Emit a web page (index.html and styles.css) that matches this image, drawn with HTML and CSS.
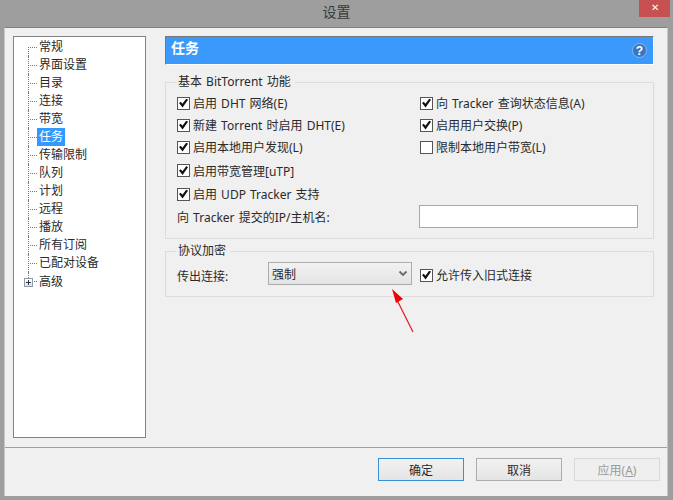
FILE: index.html
```html
<!DOCTYPE html>
<html lang="zh">
<head>
    <meta charset="UTF-8">
    <title>设置</title>
    <link rel="stylesheet" href="styles.css">
</head>
<body>

<div class="window">
    <div class="titlebar">
        <span class="title">设置</span>
        <span class="close">✕</span>
    </div>

    <div class="client">
        <div class="main">
            <ul class="tree">
                <li>常规</li>
                <li>界面设置</li>
                <li>目录</li>
                <li>连接</li>
                <li>带宽</li>
                <li><span class="selected">任务</span></li>
                <li>传输限制</li>
                <li>队列</li>
                <li>计划</li>
                <li>远程</li>
                <li>播放</li>
                <li>所有订阅</li>
                <li>已配对设备</li>
                <li class="expander"><span class="plus"></span>高级</li>
            </ul>

            <div class="pane">
                <div class="header">
                    <span class="header-title">任务</span>
                    <svg class="help" width="15" height="15" viewBox="0 0 15 15">
                        <circle cx="7.5" cy="7.5" r="7" fill="#3b77c0" stroke="#8db4e6"/>
                        <text x="7.5" y="12" text-anchor="middle" fill="#fff" font-size="12" font-weight="bold" font-family="Liberation Sans">?</text>
                    </svg>
                </div>

                <fieldset class="group group-basic">
                    <legend>基本 BitTorrent 功能</legend>
                    <div class="options">
                        <label><input type="checkbox" checked>启用 DHT 网络(E)</label>
                        <label><input type="checkbox" checked>向 Tracker 查询状态信息(A)</label>
                        <label><input type="checkbox" checked>新建 Torrent 时启用 DHT(E)</label>
                        <label><input type="checkbox" checked>启用用户交换(P)</label>
                        <label><input type="checkbox" checked>启用本地用户发现(L)</label>
                        <label><input type="checkbox">限制本地用户带宽(L)</label>
                        <label class="wide"><input type="checkbox" checked>启用带宽管理[uTP]</label>
                        <label class="wide"><input type="checkbox" checked>启用 UDP Tracker 支持</label>
                        <span>向 Tracker 提交的IP/主机名:</span>
                        <input class="textbox" type="text">
                    </div>
                </fieldset>

                <fieldset class="group group-crypt">
                    <legend>协议加密</legend>
                    <div class="crypt-row">
                        <span class="crypt-label">传出连接:</span>
                        <div class="combo">
                            <span>强制</span>
                            <svg width="10" height="7" viewBox="0 0 10 7"><path d="M1.5 1.5l3.5 3.5 3.5-3.5" fill="none" stroke="#6a6a6a" stroke-width="1.8"/></svg>
                        </div>
                        <label class="crypt-check"><input type="checkbox" checked>允许传入旧式连接</label>
                    </div>
                </fieldset>
            </div>
        </div>

        <div class="footer">
            <button class="default">确定</button>
            <button>取消</button>
            <button disabled>应用(<u>A</u>)</button>
        </div>
    </div>

    <svg class="arrow" width="40" height="60" viewBox="0 0 40 60">
        <path d="M29 48L13 16" stroke="#d8202a" stroke-width="1.2" fill="none"/>
        <path d="M8 5L19 15L12 19Z" fill="#f00000"/>
    </svg>
</div>

</body>
</html>
```

FILE: styles.css
```css
* {
    box-sizing: border-box;
}
body {
    margin: 0;
    font-family: "Noto Sans", "Noto Sans CJK SC", sans-serif;
    font-size: 12px;
    word-spacing: 1px;
    color: #2a2a2a;
}
.window {
    position: relative;
    width: 673px;
    height: 500px;
    background: #9e9e9e;
    padding-bottom: 4px;
}
.titlebar {
    position: relative;
    height: 27px;
    text-align: center;
    font-size: 14px;
    line-height: 23px;
    color: #3a3a3a;
}
.close {
    position: absolute;
    top: 0;
    right: 3px;
    width: 31px;
    height: 17px;
    background: #c75050;
    color: #fff;
    font-size: 10px;
    line-height: 15px;
}
.client {
    margin: 0 5px 0 4px;
    height: 469px;
    background: #f0f0f0;
    border-top: 1px solid #7f7f7f;
    border-left: 1px solid #c8c8c8;
    border-right: 1px solid #c8c8c8;
}
.main {
    display: flex;
    height: 420px;
    padding: 8px 0 0 8px;
    border-bottom: 1px solid #a0a0a0;
}

/* tree on the left */
.tree {
    width: 133px;
    height: 402px;
    margin: 0;
    padding: 1px 0 0 0;
    list-style: none;
    background: #fff;
    border: 1px solid #828282;
    flex: none;
}
.tree li {
    position: relative;
    height: 18px;
    line-height: 18px;
    padding-left: 25px;
}
.tree li::before {
    content: "";
    position: absolute;
    left: 14px;
    top: 9px;
    width: 9px;
    border-top: 1px dotted #777;
}
.tree li::after {
    content: "";
    position: absolute;
    left: 14px;
    top: 0;
    height: 18px;
    border-left: 1px dotted #777;
}
.tree li:first-child::after {
    top: 9px;
    height: 9px;
}
.tree li.expander {
    height: 20px;
    line-height: 20px;
}
.tree li.expander::after {
    height: 6px;
}
.tree .selected {
    display: inline-block;
    margin-left: -2px;
    padding: 0 2px;
    background: #3399ff;
    color: #fff;
}
.plus {
    position: absolute;
    z-index: 1;
    left: 10px;
    top: 6px;
    width: 9px;
    height: 9px;
    border: 1px solid #8d9bb0;
    background: linear-gradient(#fff, #dfe3ea);
}
.plus::before {
    content: "";
    position: absolute;
    left: 1px;
    top: 3px;
    width: 5px;
    height: 1px;
    background: #333;
}
.plus::after {
    content: "";
    position: absolute;
    left: 3px;
    top: 1px;
    width: 1px;
    height: 5px;
    background: #333;
}

/* right pane */
.pane {
    width: 489px;
    margin-left: 19px;
}
.header {
    display: flex;
    align-items: center;
    justify-content: space-between;
    height: 29px;
    padding: 0 6px 0 5px;
    background: #3b99fc;
    border-top: 1px solid #777;
    border-left: 1px solid #777;
    border-bottom: 1px solid #fff;
    border-right: 1px solid #fff;
    color: #fff;
}
.header-title {
    padding-bottom: 7px;
    font-size: 14px;
    font-weight: bold;
}
.group {
    margin: 0;
    padding: 0 0 0 11px;
    border: 1px solid #dcdcdc;
    min-width: 0;
}
.group legend {
    margin-left: 0;
    padding: 0 4px 0 1px;
    line-height: 14px;
    color: #2a2a2a;
}
.group-basic {
    height: 164px;
    margin-top: 10px;
}
.group-crypt {
    height: 53px;
    margin-top: 5px;
}
.options {
    display: grid;
    grid-template-columns: 243px 219px;
    grid-template-rows: 22px 22px 22px 25px 22px 23px;
    align-items: center;
    margin-top: 3px;
}
.options .wide {
    grid-column: 1 / 3;
}
label {
    display: flex;
    align-items: center;
}
input[type="checkbox"] {
    position: relative;
    appearance: none;
    flex: none;
    width: 13px;
    height: 13px;
    margin: 0 3px 0 0;
    background: #fff;
    border: 1px solid #555;
}
input[type="checkbox"]:checked::after {
    content: "";
    position: absolute;
    left: 1px;
    top: 1px;
    width: 9px;
    height: 9px;
    background: #111;
    clip-path: polygon(0 50%, 20% 35%, 38% 58%, 82% 0, 100% 14%, 40% 100%);
}
.textbox {
    width: 219px;
    height: 23px;
    margin-left: -1px;
    border: 1px solid #a8a8a8;
    background: #fff;
}
.crypt-row {
    display: flex;
    align-items: center;
    margin-top: 4px;
}
.crypt-label {
    width: 91px;
    padding-top: 5px;
}
.crypt-check {
    padding-top: 3px;
}
.combo {
    display: flex;
    align-items: center;
    justify-content: space-between;
    width: 144px;
    height: 23px;
    margin-right: 8px;
    padding: 0 3px 0 3px;
    border: 1px solid #acacac;
    background: linear-gradient(#f2f2f2, #e4e4e4);
}

/* bottom buttons */
.footer {
    display: flex;
    justify-content: flex-end;
    gap: 12px;
    padding: 10px 7px 0 0;
}
button {
    width: 86px;
    height: 23px;
    padding: 0;
    font: inherit;
    color: #2a2a2a;
    border: 1px solid #acacac;
    background: linear-gradient(#f2f2f2, #e4e4e4);
}
button.default {
    border-color: #3a8fd8;
}
button:disabled {
    color: #9a9a9a;
    border-color: #d9d9d9;
    background: #efefef;
}

/* annotation drawn over the dialog */
.arrow {
    position: absolute;
    left: 384px;
    top: 284px;
}
```
